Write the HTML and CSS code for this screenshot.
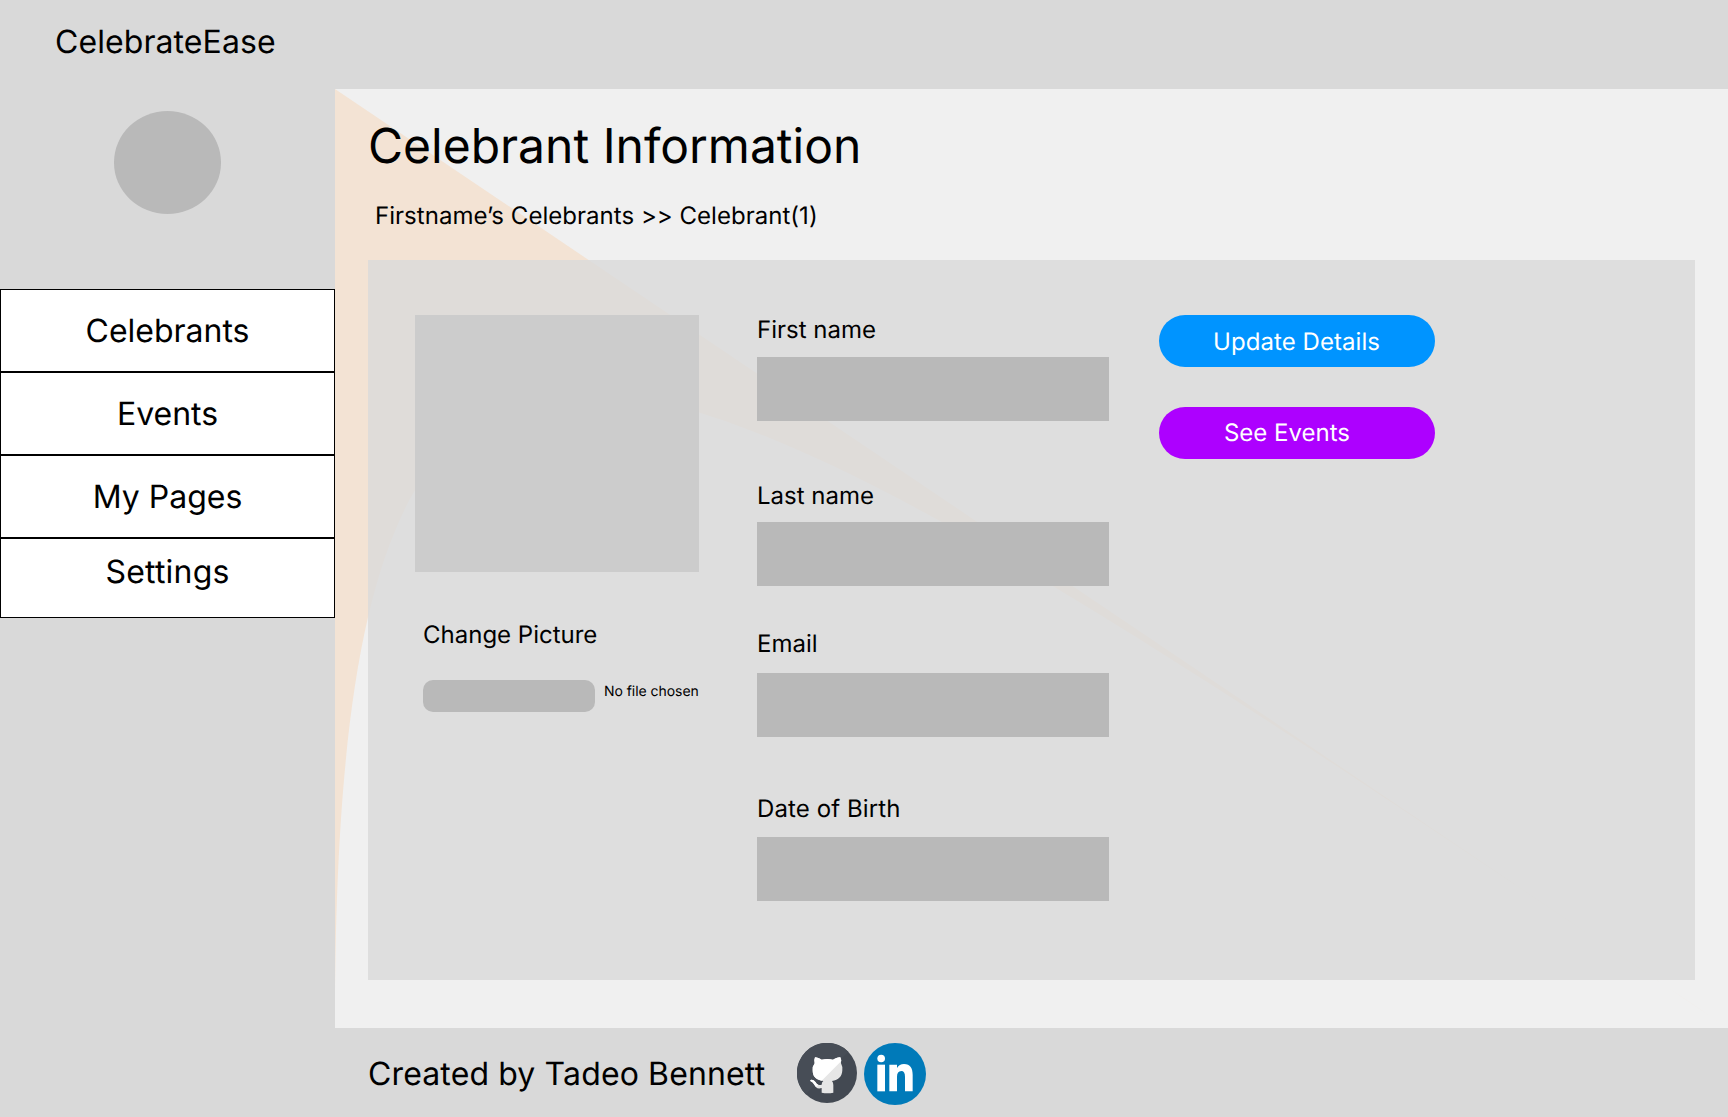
FILE: index.html
```html
<!DOCTYPE html>
<html lang="en">
<head>
<meta charset="utf-8">
<title>CelebrateEase</title>
<link rel="stylesheet" href="styles.css">
</head>
<body>
<div class="app">
  <header class="topbar">CelebrateEase</header>
  <aside class="sidebar">
    <div class="avatar"></div>
    <nav class="nav">
      <a class="nav-item">Celebrants</a>
      <a class="nav-item">Events</a>
      <a class="nav-item">My Pages</a>
      <a class="nav-item nav-item-last">Settings</a>
    </nav>
  </aside>
  <main class="main">
    <svg class="swoosh" viewBox="0 0 1393 939"><path fill="#f3e3d4" d="M0 0 L1393 939 C295 199 0 -8 0 936 Z"/></svg>
    <h1 class="title">Celebrant Information</h1>
    <p class="breadcrumb">Firstname’s Celebrants &gt;&gt; Celebrant(1)</p>
    <section class="card">
      <div class="picture-col">
        <div class="picture"></div>
        <div class="picture-label">Change Picture</div>
        <div class="file-row">
          <div class="file-button"></div>
          <span class="file-name">No file chosen</span>
        </div>
      </div>
      <div class="fields">
        <div class="field first"><label>First name</label><div class="input"></div></div>
        <div class="field last"><label>Last name</label><div class="input"></div></div>
        <div class="field email"><label>Email</label><div class="input"></div></div>
        <div class="field birth"><label>Date of Birth</label><div class="input"></div></div>
      </div>
      <div class="actions">
        <div class="button update">Update Details</div>
        <div class="button events">See Events</div>
      </div>
    </section>
  </main>
  <footer class="footer">
    <span class="credit">Created by Tadeo Bennett</span>
    <svg class="github" viewBox="50 52 180 180">
      <circle cx="140" cy="142" r="90" fill="#434952"/>
      <path fill="#474d56" d="M76 206 A90 90 0 0 1 76 78 A90 90 0 0 1 204 78 Z"/>
      <path fill="#e6e6e6" d="M104 95 C110 95 118 99 124 102 Q141 98 158 102 C166 97 174 94 180 95 Q184 104 182 113 Q187 122 186 134 C185 153 175 163 155 166 Q159 170 159 178 V201 Q142 205 124 201 V187 C111 191 105 184 102 177 Q98 169 90 166 Q89 162 94 162 C103 163 106 170 109 174 Q114 180 124 177 Q124 170 129 166 C107 163 97 153 97 134 Q96 122 103 113 Q100 104 104 95 Z"/>
      <path fill="#fff" d="M104 95 C110 95 118 99 124 102 Q141 98 158 102 C166 97 174 94 180 95 Q183 101 183 106 L124 165 C104 161 97 151 97 134 Q96 122 103 113 Q100 104 104 95 Z M90 166 Q89 162 94 162 C103 163 106 170 109 174 L114 177 L107 184 L102 177 Q98 169 90 166 Z"/>
    </svg>
    <svg class="linkedin" viewBox="252 54 186 186">
      <circle cx="345" cy="147" r="93" fill="#007ab9"/>
      <g fill="#fff">
        <circle cx="303.500" cy="100.500" r="11.500"/>
        <rect x="292" y="119" width="23" height="80"/>
        <path d="M328 119 H351 V129 Q358 117 372 117 C391 117 398 130 398 149 V199 H375 V155 Q375 138 364 138 Q351 139 351 155 V199 H328 Z"/>
      </g>
    </svg>
  </footer>
</div>
</body>
</html>
```
FILE: styles.css
```css
* { box-sizing: border-box; }

body {
  margin: 0;
  font-family: Inter, "Liberation Sans", sans-serif;
  font-size: 24px;
  line-height: 29px;
  font-variant-ligatures: no-common-ligatures;
  text-rendering: geometricPrecision;
  color: #000;
  background: #d9d9d9;
}

.app {
  display: grid;
  grid-template-columns: 335px 1fr;
  grid-template-rows: 89px 939px 89px;
  width: 1728px;
  height: 1117px;
  overflow: hidden;
}

.topbar {
  grid-column: 1 / 3;
  padding: 22px 0 0 55px;
  font-size: 32px;
  line-height: 39px;
  letter-spacing: 0.08px;
}

.sidebar {
  display: flex;
  flex-direction: column;
  align-items: center;
  padding-top: 22px;
}

.avatar {
  width: 107px;
  height: 102.5px;
  border-radius: 50%;
  background: #b9b9b9;
}

.nav {
  width: 100%;
  margin-top: 75.5px;
}

.nav-item {
  display: flex;
  justify-content: center;
  align-items: center;
  height: 83px;
  border: 1px solid #000;
  background: #fff;
  font-size: 32px;
  line-height: 39px;
}

.nav-item-last {
  height: 80px;
  padding-bottom: 14px;
  letter-spacing: 0.2px;
}

/* The swoosh is a backdrop; the translucent card tints it. */
.main {
  position: relative;
  padding: 28px 33px 48px;
  background: #f0f0f0;
}

.swoosh {
  position: absolute;
  inset: 0;
  width: 1393px;
  height: 939px;
}

.title,
.breadcrumb,
.card { position: relative; }

.title {
  margin: 0;
  font-size: 48px;
  font-weight: 400;
  line-height: 58px;
}

.breadcrumb {
  margin: 26px 0 30px;
  padding-left: 7px;
  letter-spacing: 0.03px;
}

.card {
  display: flex;
  align-items: flex-start;
  height: 720px;
  padding: 55px 47px 0;
  background: rgba(217, 217, 217, 0.8);
}

.picture-col { width: 284px; }

.picture {
  height: 257px;
  background: #ccc;
}

.picture-label { margin: 48px 0 31px 8px; }

.file-row {
  display: flex;
  gap: 9px;
  margin-left: 8px;
  white-space: nowrap;
}

.file-button {
  flex: none;
  width: 172px;
  height: 32px;
  border-radius: 10px;
  background: #b9b9b9;
}

.file-name {
  padding-top: 3px;
  font-size: 14px;
  line-height: 17px;
  letter-spacing: -0.05px;
}

.fields {
  width: 352px;
  margin-left: 58px;
}

.field label { display: block; }

.input {
  height: 64px;
  background: #b9b9b9;
}

.first label { margin-bottom: 13px; }
.last { margin-top: 60px; }
.last label { margin-bottom: 12px; }
.email { margin-top: 43px; }
.email label { margin-bottom: 15px; }
.birth { margin-top: 57px; }
.birth label {
  margin-bottom: 14px;
  letter-spacing: 0.1px;
}

.actions {
  display: grid;
  gap: 40px;
  width: 276px;
  margin-left: 50px;
}

.button {
  height: 52px;
  border-radius: 26px;
  color: #fff;
  text-align: center;
}

.update {
  padding: 12px 1px 0 0;
  letter-spacing: 0.06px;
  background: #0094ff;
}

.events {
  padding: 11px 20px 0 0;
  background: #ad00ff;
}

.footer {
  grid-column: 2;
  display: flex;
  align-items: flex-start;
  padding-left: 33px;
}

.credit {
  width: 429px;
  margin-top: 26px;
  font-size: 32px;
  line-height: 39px;
  letter-spacing: 0.13px;
}

.github {
  width: 60px;
  height: 60px;
  margin-top: 15px;
}

.linkedin {
  width: 62px;
  height: 62px;
  margin: 15px 0 0 7px;
}
```
